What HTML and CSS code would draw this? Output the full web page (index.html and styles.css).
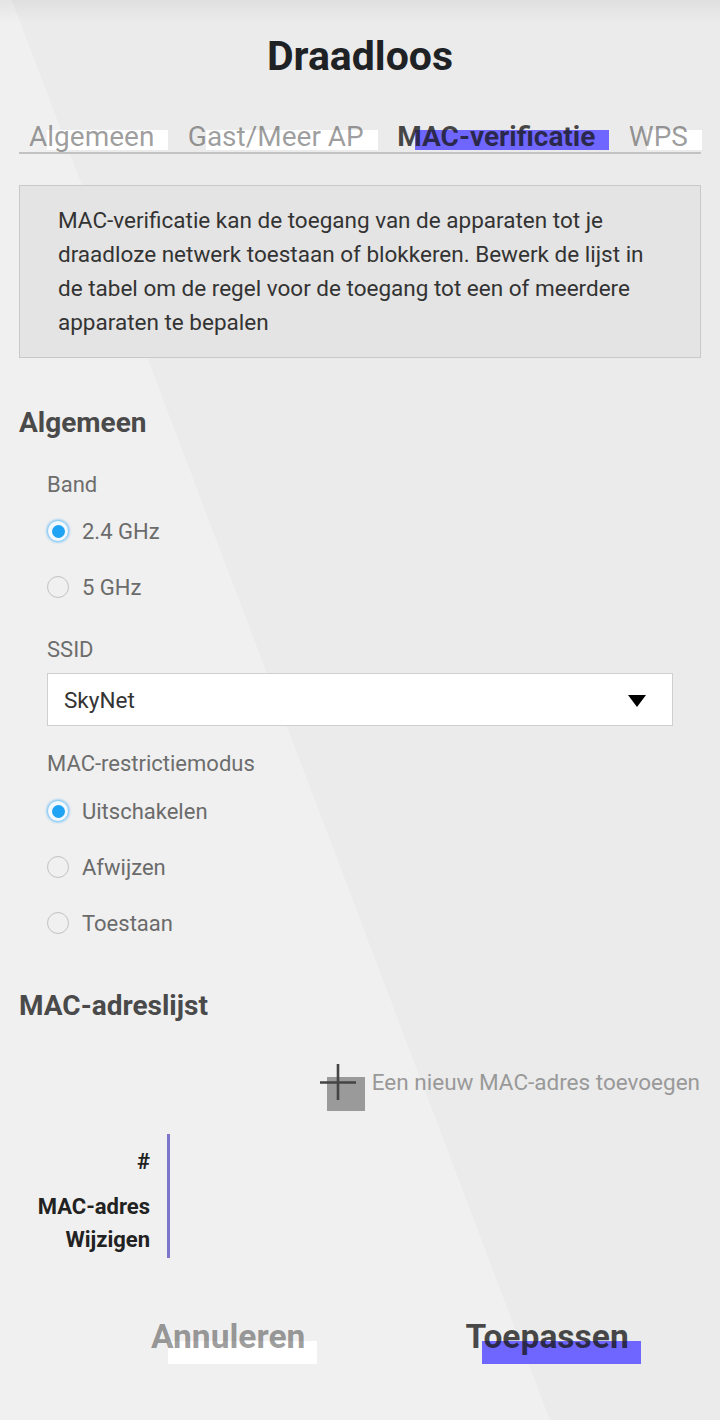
FILE: index.html
```html
<!DOCTYPE html>
<html lang="nl">
<head>
<meta charset="utf-8">
<title>Draadloos</title>
<link rel="stylesheet" href="styles.css">
</head>
<body>
<main class="page">
  <h1 class="title">Draadloos</h1>

  <nav class="tabs">
    <span class="tab">Algemeen</span>
    <span class="tab">Gast/Meer AP</span>
    <span class="tab tab-active">MAC-verificatie</span>
    <span class="tab">WPS</span>
  </nav>

  <div class="info">MAC-verificatie kan de toegang van de apparaten tot je draadloze netwerk toestaan of blokkeren. Bewerk de lijst in de tabel om de regel voor de toegang tot een of meerdere apparaten te bepalen</div>

  <h2 class="section">Algemeen</h2>

  <div class="field">
    <div class="label label-first">Band</div>
    <div class="radio radio-first"><span class="dot dot-on"></span><span>2.4 GHz</span></div>
    <div class="radio"><span class="dot"></span><span>5 GHz</span></div>

    <div class="label label-ssid">SSID</div>
    <div class="select"><span>SkyNet</span><span class="caret"></span></div>

    <div class="label label-mode">MAC-restrictiemodus</div>
    <div class="radio radio-mode"><span class="dot dot-on"></span><span>Uitschakelen</span></div>
    <div class="radio"><span class="dot"></span><span>Afwijzen</span></div>
    <div class="radio"><span class="dot"></span><span>Toestaan</span></div>
  </div>

  <h2 class="section section-list">MAC-adreslijst</h2>

  <div class="add-row">
    <span class="add-icon">
      <span class="add-square"></span>
      <svg class="add-plus" width="36" height="36" viewBox="0 0 36 36"><path d="M0 18.5H36M18 0V36" stroke="#444" stroke-width="2.6" fill="none"/></svg>
    </span>
    <span class="add-text">Een nieuw MAC-adres toevoegen</span>
  </div>

  <div class="table">
    <div class="table-head">
      <div class="th th-hash">#</div>
      <div class="th th-mac">MAC-adres</div>
      <div class="th th-edit">Wijzigen</div>
    </div>
    <div class="table-body"></div>
  </div>

  <div class="buttons">
    <span class="btn btn-cancel">Annuleren</span>
    <span class="btn btn-apply">Toepassen</span>
  </div>
</main>
</body>
</html>
```

FILE: styles.css
```css
* {
  box-sizing: border-box;
}

html {
  min-height: 100%;
  background:
    linear-gradient(to bottom, rgba(0, 0, 0, 0.05), rgba(0, 0, 0, 0) 22px),
    linear-gradient(69.25deg, #f0f0f0 43.7%, #ebebeb 43.7%);
}

body {
  margin: 0;
  min-height: 1420px;
  font-family: Roboto, "Noto Sans", "Liberation Sans", sans-serif;
}

.page {
  padding: 0 19px 40px;
}

.title {
  margin: 34px 0 0;
  font-size: 41px;
  line-height: 44px;
  font-weight: 700;
  text-align: center;
  color: #1f2225;
}

/* Tabs */
.tabs {
  margin-top: 44px;
  display: flex;
  justify-content: space-between;
  padding: 0 13px 0 10px;
  border-bottom: 2px solid #c2c2c2;
}

.tab {
  position: relative;
  isolation: isolate;
  font-size: 28px;
  line-height: 30px;
  color: rgba(0, 0, 0, 0.4);
  white-space: nowrap;
}

.tab::before {
  content: "";
  position: absolute;
  left: 18px;
  right: -14px;
  top: 8px;
  height: 20px;
  background: #ffffff;
  z-index: -1;
}

.tab-active {
  font-weight: 700;
  color: rgba(25, 25, 25, 0.8);
}

.tab-active::before {
  background: #6f66ff;
}

/* Info box */
.info {
  margin-top: 31px;
  background: #e4e4e4;
  border: 1px solid #c9c9c9;
  padding: 17px 38px 18px;
  font-size: 22.5px;
  line-height: 34px;
  color: #333333;
}

/* Sections */
.section {
  margin: 50px 0 0;
  font-size: 28px;
  line-height: 30px;
  font-weight: 700;
  color: #4a4a4a;
}

.section-list {
  margin-top: 40px;
}

.field {
  padding-left: 28px;
}

.label {
  font-size: 22px;
  line-height: 30px;
  color: #6d6d6d;
}

.label-first {
  margin-top: 32px;
}

.label-ssid {
  margin-top: 20px;
}

.label-mode {
  margin-top: 23px;
}

.radio {
  height: 56px;
  display: flex;
  align-items: center;
  gap: 13px;
  font-size: 22px;
  color: #6b6b6b;
}

.radio-first {
  margin-top: 3px;
}

.radio-mode {
  margin-top: 4px;
}

.dot {
  width: 22px;
  height: 22px;
  border-radius: 50%;
  border: 1px solid #c2c2c2;
  display: flex;
  align-items: center;
  justify-content: center;
  flex: none;
}

.dot-on {
  border-color: #8ccdf7;
  box-shadow: 0 0 2px 1px rgba(40, 160, 245, 0.35);
  background: #f4f9fd;
}

.dot-on::after {
  content: "";
  width: 13px;
  height: 13px;
  border-radius: 50%;
  background: #1ea3f5;
}

/* Select */
.select {
  margin-top: 8px;
  width: 626px;
  height: 53px;
  background: #ffffff;
  border: 1px solid #cfcfcf;
  display: flex;
  align-items: center;
  justify-content: space-between;
  padding: 0 26px 0 16px;
  font-size: 22.5px;
  color: #333333;
}

.caret {
  width: 0;
  height: 0;
  border-left: 9px solid transparent;
  border-right: 9px solid transparent;
  border-top: 12px solid #000000;
  margin-top: 2px;
}

/* Add row */
.add-row {
  margin-top: 43px;
  height: 36px;
  display: flex;
  justify-content: flex-end;
  align-items: center;
  gap: 16px;
  padding-right: 1px;
}

.add-icon {
  position: relative;
  width: 36px;
  height: 36px;
  flex: none;
}

.add-square {
  position: absolute;
  left: 7px;
  top: 13px;
  width: 38px;
  height: 34px;
  background: #9a9a9a;
}

.add-plus {
  position: absolute;
  left: 0;
  top: 0;
}

.add-text {
  font-size: 22.5px;
  color: #999999;
  white-space: nowrap;
}

/* Table */
.table {
  margin-top: 34px;
  display: flex;
}

.table-head {
  width: 148px;
  padding: 13px 17px 3px 0;
  text-align: right;
  font-size: 22px;
  line-height: 30px;
  font-weight: 700;
  color: #222222;
}

.th-mac {
  margin-top: 15px;
}

.th-edit {
  margin-top: 3px;
}

.table-body {
  border-left: 3px solid #7b76c9;
}

/* Buttons */
.buttons {
  margin-top: 59px;
  display: flex;
  gap: 160px;
  padding-left: 132px;
}

.btn {
  position: relative;
  isolation: isolate;
  font-size: 33.6px;
  line-height: 40px;
  font-weight: 700;
  white-space: nowrap;
}

.btn::before {
  content: "";
  position: absolute;
  left: 17px;
  right: -12px;
  top: 24px;
  height: 23px;
  background: #ffffff;
  z-index: -1;
}

.btn-cancel {
  color: rgba(0, 0, 0, 0.4);
}

.btn-apply {
  color: rgba(25, 25, 25, 0.78);
}

.btn-apply::before {
  background: #6f66ff;
}
```
